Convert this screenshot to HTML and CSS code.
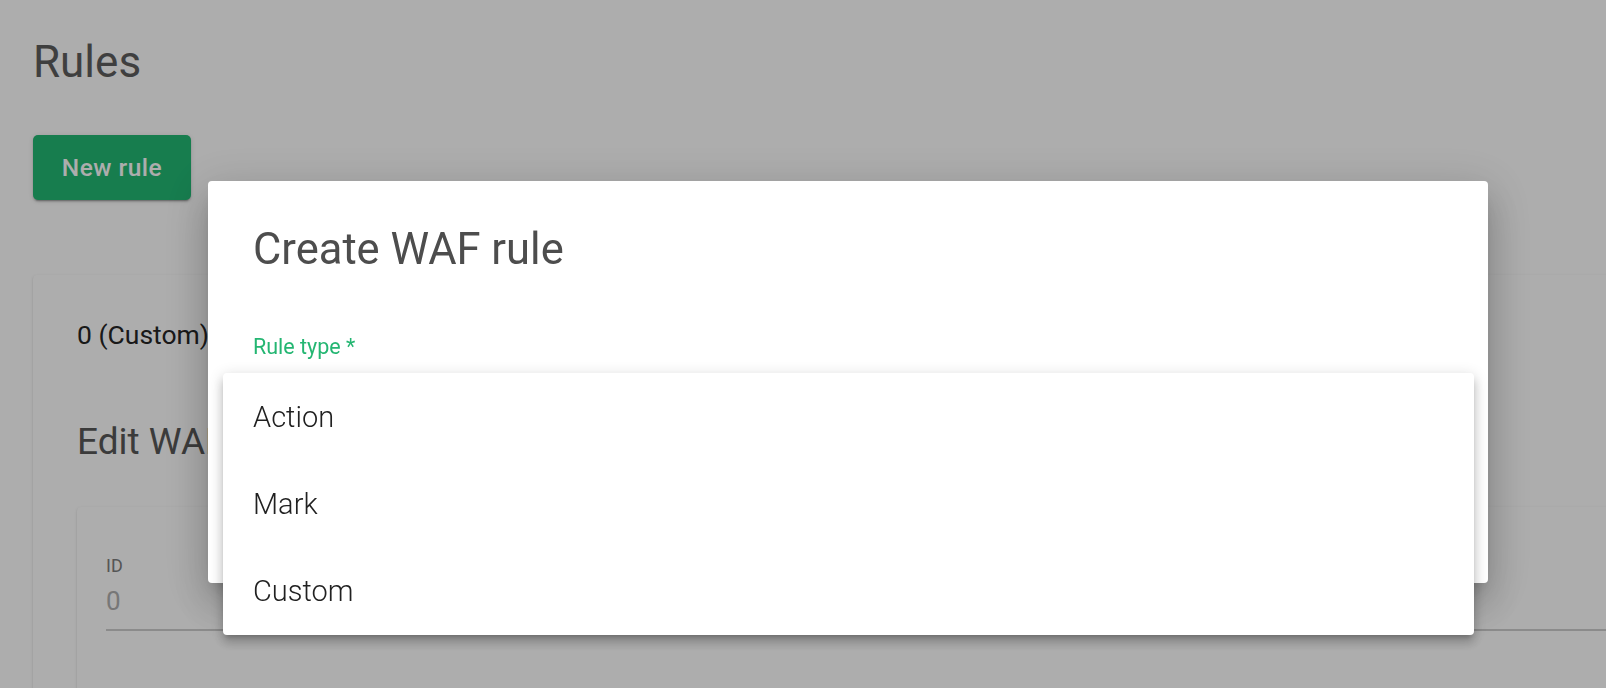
FILE: index.html
```html
<!DOCTYPE html>
<html>
<head>
<meta charset="utf-8">
<link rel="stylesheet" href="styles.css">
</head>
<body>
<div class="page">
  <h1 class="page-title">Rules</h1>
  <button class="btn-primary">New rule</button>
  <div class="card">
    <div class="card-sub">0 (Custom)</div>
    <h2 class="card-title">Edit WAF rule</h2>
    <div class="inner-card">
      <div class="field">
        <div class="field-label">ID</div>
        <div class="field-value">0</div>
      </div>
    </div>
  </div>
</div>

<div class="backdrop"></div>

<div class="dialog">
  <h2 class="dialog-title">Create WAF rule</h2>
  <div class="dialog-label">Rule type *</div>
</div>

<div class="menu">
  <div class="menu-item">Action</div>
  <div class="menu-item">Mark</div>
  <div class="menu-item">Custom</div>
</div>
</body>
</html>
```

FILE: styles.css
```css
html, body {
  margin: 0;
  padding: 0;
  width: 1606px;
  height: 688px;
  overflow: hidden;
  background: #ffffff;
  font-family: Roboto, "Liberation Sans", sans-serif;
}

.page {
  padding: 36px 0 0 33px;
  display: flex;
  flex-direction: column;
  align-items: flex-start;
}

.page-title {
  margin: 0;
  font-size: 44px;
  font-weight: 400;
  line-height: normal;
  color: #5e5e5e;
}

.btn-primary {
  margin-top: 47px;
  width: 158px;
  height: 65px;
  border: none;
  border-radius: 5px;
  background: #22b874;
  color: #ffffff;
  font-family: Roboto, "Liberation Sans", sans-serif;
  font-size: 24.5px;
  font-weight: 500;
  letter-spacing: 0.02em;
  box-shadow: 0 3px 1px -2px rgba(0,0,0,.2), 0 2px 2px 0 rgba(0,0,0,.14), 0 1px 5px 0 rgba(0,0,0,.12);
}

.card {
  margin-top: 75px;
  width: 1700px;
  height: 600px;
  box-sizing: border-box;
  padding: 44px 0 0 44px;
  background: #ffffff;
  border-radius: 4px;
  box-shadow: 0 2px 1px -1px rgba(0,0,0,.2), 0 1px 1px 0 rgba(0,0,0,.14), 0 1px 3px 0 rgba(0,0,0,.12);
}

.card-sub {
  font-size: 26.5px;
  line-height: normal;
  color: #262626;
}

.card-title {
  margin: 70px 0 0 0;
  font-size: 37px;
  font-weight: 400;
  line-height: normal;
  color: #585858;
}

.inner-card {
  margin-top: 44px;
  height: 400px;
  box-sizing: border-box;
  padding: 48px 0 0 29px;
  background: #ffffff;
  border-radius: 4px;
  box-shadow: 0 2px 1px -1px rgba(0,0,0,.2), 0 1px 1px 0 rgba(0,0,0,.14), 0 1px 3px 0 rgba(0,0,0,.12);
}

.field {
  border-bottom: 2px solid #cdcdcd;
  padding-bottom: 13px;
}

.field-label {
  font-size: 18px;
  line-height: normal;
  color: #7e7e7e;
}

.field-value {
  margin-top: 10px;
  font-size: 26px;
  line-height: normal;
  color: #b0b0b0;
}

.backdrop {
  position: fixed;
  inset: 0;
  background: rgba(0,0,0,0.32);
}

.dialog {
  position: fixed;
  left: 208px;
  top: 181px;
  width: 1280px;
  height: 402px;
  box-sizing: border-box;
  padding: 43px 45px 0 45px;
  background: #ffffff;
  border-radius: 4px;
  box-shadow: 0 11px 15px -7px rgba(0,0,0,.2), 0 24px 38px 3px rgba(0,0,0,.14), 0 9px 46px 8px rgba(0,0,0,.12);
}

.dialog-title {
  margin: 0;
  font-size: 43.5px;
  font-weight: 400;
  line-height: normal;
  color: #4d4d4d;
}

.dialog-label {
  margin-top: 59px;
  font-size: 21.5px;
  line-height: normal;
  color: #24b672;
}

.menu {
  position: fixed;
  left: 223px;
  top: 373px;
  width: 1251px;
  height: 262px;
  display: flex;
  flex-direction: column;
  background: #ffffff;
  border-radius: 4px;
  box-shadow: 0 5px 5px -3px rgba(0,0,0,.2), 0 8px 10px 1px rgba(0,0,0,.14), 0 3px 14px 2px rgba(0,0,0,.12);
}

.menu-item {
  flex: 1;
  display: flex;
  align-items: center;
  padding-left: 30px;
  font-size: 29px;
  font-weight: 300;
  color: #212121;
}
```
